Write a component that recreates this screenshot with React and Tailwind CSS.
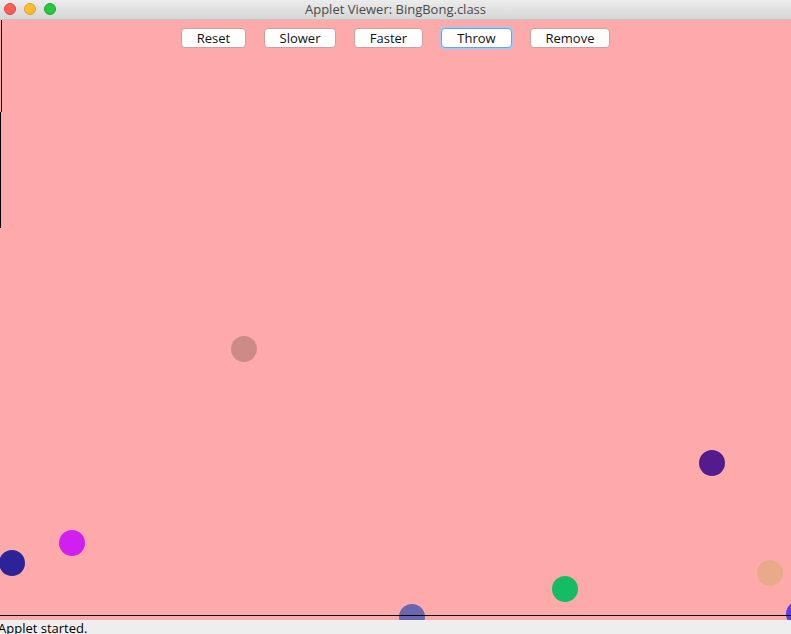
import React from 'react';

const BUTTONS = [
  { label: 'Reset', w: 'w-[65px]' },
  { label: 'Slower', w: 'w-[72px]' },
  { label: 'Faster', w: 'w-[69px]' },
  { label: 'Throw', w: 'w-[71px]', focused: true },
  { label: 'Remove', w: 'w-[80px]' },
];

// ball centres on the canvas (canvas origin is at y=20)
const BALLS = [
  { x: 244, y: 329, color: '#cc8b87' },
  { x: 712, y: 443, color: '#531b8d' },
  { x: 770, y: 553, color: '#e8aa88' },
  { x: 72, y: 523, color: '#d11ff0' },
  { x: 12, y: 543, color: '#2d2399' },
  { x: 565, y: 569, color: '#14bd63' },
  { x: 412, y: 597, color: '#6a66b0' },
  { x: 799, y: 594, color: '#5c3ef0' },
];

function App() {
  return (
    <div
      className="w-[791px] h-[634px] overflow-hidden flex flex-col bg-[#eeeeee]"
      style={{ fontFamily: '"Open Sans", "Liberation Sans", sans-serif' }}
    >
      {/* Title bar */}
      <div className="relative flex-none h-[20px] flex items-center justify-center bg-gradient-to-b from-[#ececec] to-[#d6d6d6] border-b border-[#c4c4c4]">
        <div className="absolute left-[4px] top-[3px] flex gap-[8px]">
          <span className="w-[12px] h-[12px] rounded-full bg-[#fe5f57] border border-[#e0443e]" />
          <span className="w-[12px] h-[12px] rounded-full bg-[#febc2e] border border-[#dea123]" />
          <span className="w-[12px] h-[12px] rounded-full bg-[#28c840] border border-[#1aab29]" />
        </div>
        <span className="text-[13px] leading-none text-[#4a4a4a]">Applet Viewer: BingBong.class</span>
      </div>

      {/* Canvas */}
      <div className="relative flex-none h-[600px] bg-[#ffaaaa] overflow-hidden">
        <div className="relative z-10 flex justify-center gap-[18px] pt-[8px]">
          {BUTTONS.map((b) => (
            <button
              key={b.label}
              className={`${b.w} h-[20px] flex items-center justify-center rounded-[4px] bg-white text-[13px] leading-none text-[#111] ${
                b.focused
                  ? 'border border-[#6d9ef0] shadow-[0_0_0_1.5px_#a9c6f5]'
                  : 'border border-[#c9a0a0]'
              }`}
            >
              {b.label}
            </button>
          ))}
        </div>

        {/* left edge marks */}
        <div className="absolute left-[1px] top-0 w-px h-[92px] bg-black" />
        <div className="absolute left-0 top-[92px] w-px h-[116px] bg-black" />

        {BALLS.map((b, i) => (
          <div
            key={i}
            className="absolute w-[26px] h-[26px] rounded-full"
            style={{ left: b.x - 13, top: b.y - 13, backgroundColor: b.color }}
          />
        ))}

        <div className="absolute left-0 right-0 top-[595px] h-px bg-black z-10" />
      </div>

      {/* Status bar */}
      <div className="flex-1 bg-[#eeeeee] overflow-hidden">
        <div className="ml-[-2px] text-[13px] leading-[16px] text-black">Applet started.</div>
      </div>
    </div>
  );
}

export default App;
